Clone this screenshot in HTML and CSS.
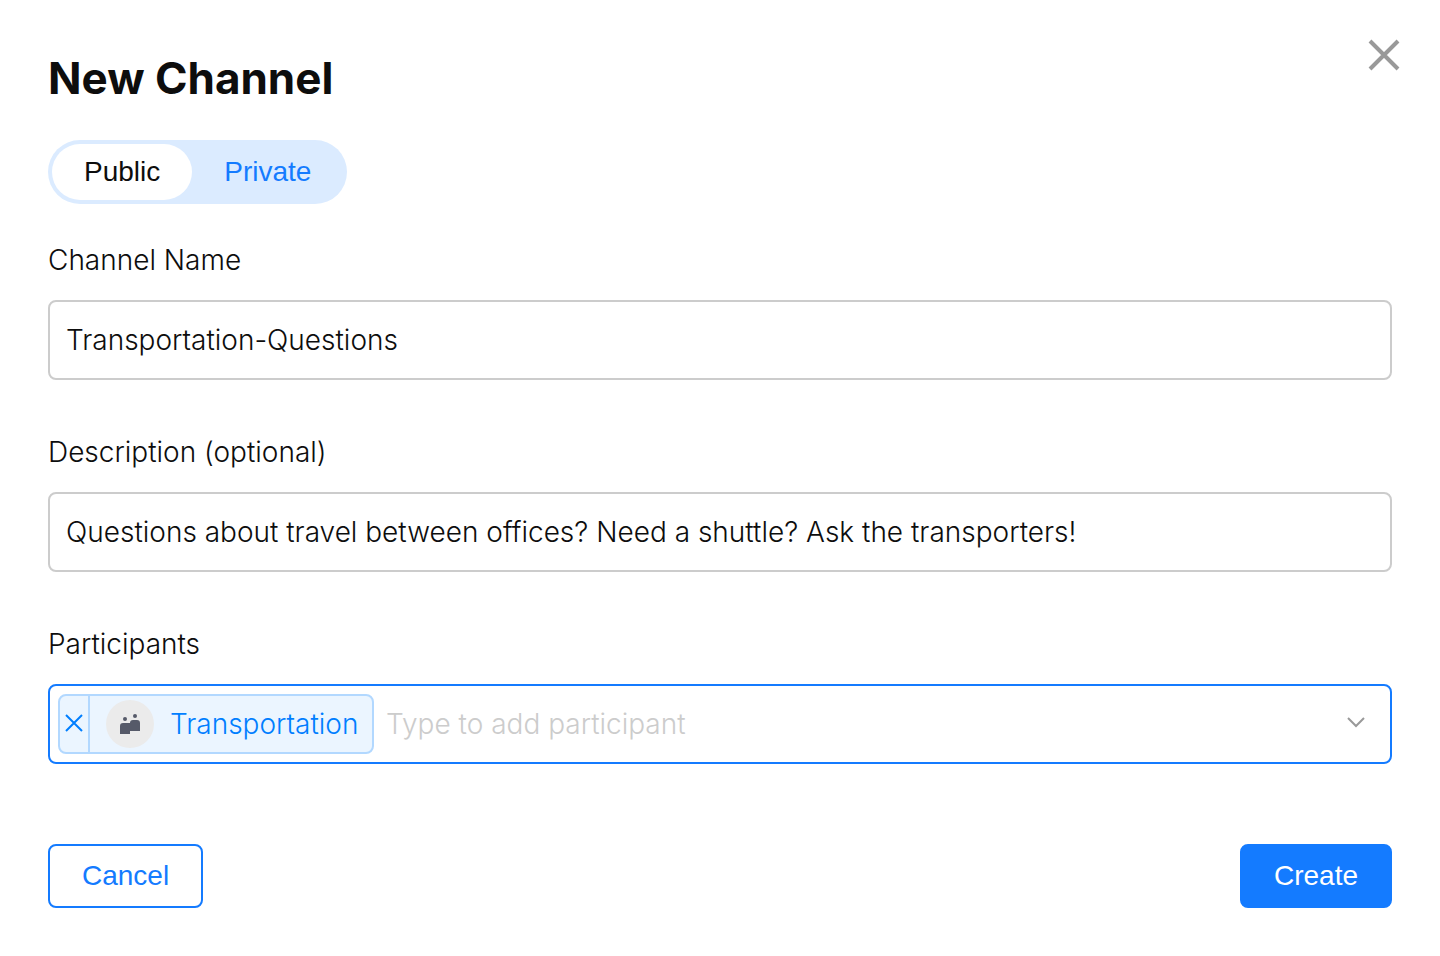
FILE: index.html
```html
<!DOCTYPE html>
<html lang="en">
<head>
  <meta charset="UTF-8">
  <meta name="viewport" content="width=device-width, initial-scale=1.0">
  <title>New Channel</title>
  <link rel="stylesheet" href="styles.css">
</head>
<body>
  <div class="dialog">
    <div class="dialog-header">
      <h1>New Channel</h1>
      <button type="button" class="btn-close" aria-label="Close">
        <svg width="32" height="32" viewBox="0 0 32 32" fill="none" stroke="#999" stroke-width="4">
          <path d="M2 2l28 28M30 2L2 30"/>
        </svg>
      </button>
    </div>

    <form class="channel-form">
      <!-- Channel type -->
      <div class="toggle">
        <button type="button" class="toggle-item active" aria-pressed="true">Public</button>
        <button type="button" class="toggle-item" aria-pressed="false">Private</button>
      </div>

      <div class="field">
        <label for="name">Channel Name</label>
        <input type="text" id="name" class="box" value="Transportation-Questions">
      </div>

      <div class="field">
        <label for="description">Description (optional)</label>
        <input type="text" id="description" class="box" value="Questions about travel between offices? Need a shuttle? Ask the transporters!">
      </div>

      <div class="field">
        <label for="participants">Participants</label>
        <div class="box select-box">
          <div class="tag">
            <button type="button" class="tag-remove" aria-label="Remove Transportation">
              <svg width="20" height="20" viewBox="0 0 20 20" fill="none" stroke="#007eff" stroke-width="2">
                <path d="M2 2l16 16M18 2L2 18"/>
              </svg>
            </button>
            <span class="tag-label">
              <span class="avatar">
                <svg width="20" height="20" viewBox="0 0 20 20" fill="#565a69">
                  <circle cx="5" cy="5" r="2"/>
                  <circle cx="15" cy="2" r="2"/>
                  <path d="M0 20V12q0-3 3-3h7q0-3 3-3h4q3 0 3 3v8H10v3z"/>
                </svg>
              </span>
              Transportation
            </span>
          </div>
          <input type="text" id="participants" class="tag-input" placeholder="Type to add participant">
          <svg class="arrow" width="20" height="16" viewBox="0 0 20 16" fill="none" stroke="#999" stroke-width="2">
            <path d="M2 2l8 8 8-8"/>
          </svg>
        </div>
      </div>

      <div class="actions">
        <button type="button" class="btn btn-cancel">Cancel</button>
        <button type="submit" class="btn btn-create">Create</button>
      </div>
    </form>
  </div>
</body>
</html>
```

FILE: styles.css
```css
* {
  box-sizing: border-box;
}
body {
  margin: 0;
  background: #fff;
  color: #0d0d0d;
  font-family: Inter, "Liberation Sans", sans-serif;
  font-size: 28px;
  font-weight: 300;
  line-height: 40px;
}
button {
  padding: 0;
  border: none;
  background: none;
  font-family: "Liberation Sans", Arial, sans-serif;
  font-size: 28px;
  font-weight: 400;
  cursor: pointer;
}
svg {
  display: block;
}
.dialog {
  padding: 48px;
}
/* Header */
.dialog-header {
  display: flex;
  justify-content: space-between;
  align-items: flex-start;
  margin-bottom: 32px;
}
h1 {
  margin: 0;
  font-size: 44px;
  font-weight: 700;
  line-height: 60px;
}
.btn-close {
  margin: -9px -8px;
}
/* Public / Private */
.toggle {
  display: flex;
  align-self: flex-start;
  margin-bottom: 36px;
  padding: 4px;
  border-radius: 32px;
  background: #dbebff;
}
.toggle-item {
  height: 56px;
  padding: 0 32px;
  border-radius: 28px;
  color: #147bff;
}
.toggle-item.active {
  background: #fff;
  color: #0d0d0d;
}
/* Fields */
.channel-form {
  display: flex;
  flex-direction: column;
}
.field {
  margin-bottom: 52px;
}
.field label {
  display: block;
  margin-bottom: 20px;
}
.box {
  display: block;
  width: 100%;
  height: 80px;
  padding: 0 16px;
  border: 2px solid #ccc;
  border-radius: 8px;
  background: #fff;
  color: #0d0d0d;
  font: inherit;
  outline: none;
}
.select-box {
  display: flex;
  align-items: center;
  padding: 0 24px 0 8px;
  border-color: #147bff;
}
/* Selected participant */
.tag {
  display: flex;
  min-width: 316px;
  height: 60px;
  border: 2px solid #b2d8ff;
  border-radius: 8px;
  background: #ebf5ff;
  color: #007eff;
}
.tag-remove {
  display: flex;
  align-items: center;
  justify-content: center;
  width: 30px;
  padding-bottom: 2px;
  border-right: 2px solid #b2d8ff;
}
.tag-label {
  display: flex;
  align-items: center;
  gap: 16px;
  padding: 0 8px 0 16px;
}
.avatar {
  display: flex;
  align-items: center;
  justify-content: center;
  width: 48px;
  height: 48px;
  border-radius: 50%;
  background: #ebebeb;
}
.tag-input {
  flex: 1;
  min-width: 0;
  height: 56px;
  padding: 0 12px;
  border: none;
  background: none;
  color: inherit;
  font: inherit;
  outline: none;
}
.tag-input::placeholder {
  color: #ccc;
  opacity: 1;
}
/* Buttons */
.actions {
  display: flex;
  justify-content: space-between;
  margin-top: 28px;
}
.btn {
  height: 64px;
  padding: 0 32px;
  border: 2px solid #147bff;
  border-radius: 8px;
  color: #147bff;
}
.btn-create {
  background: #147bff;
  color: #fff;
}
```
